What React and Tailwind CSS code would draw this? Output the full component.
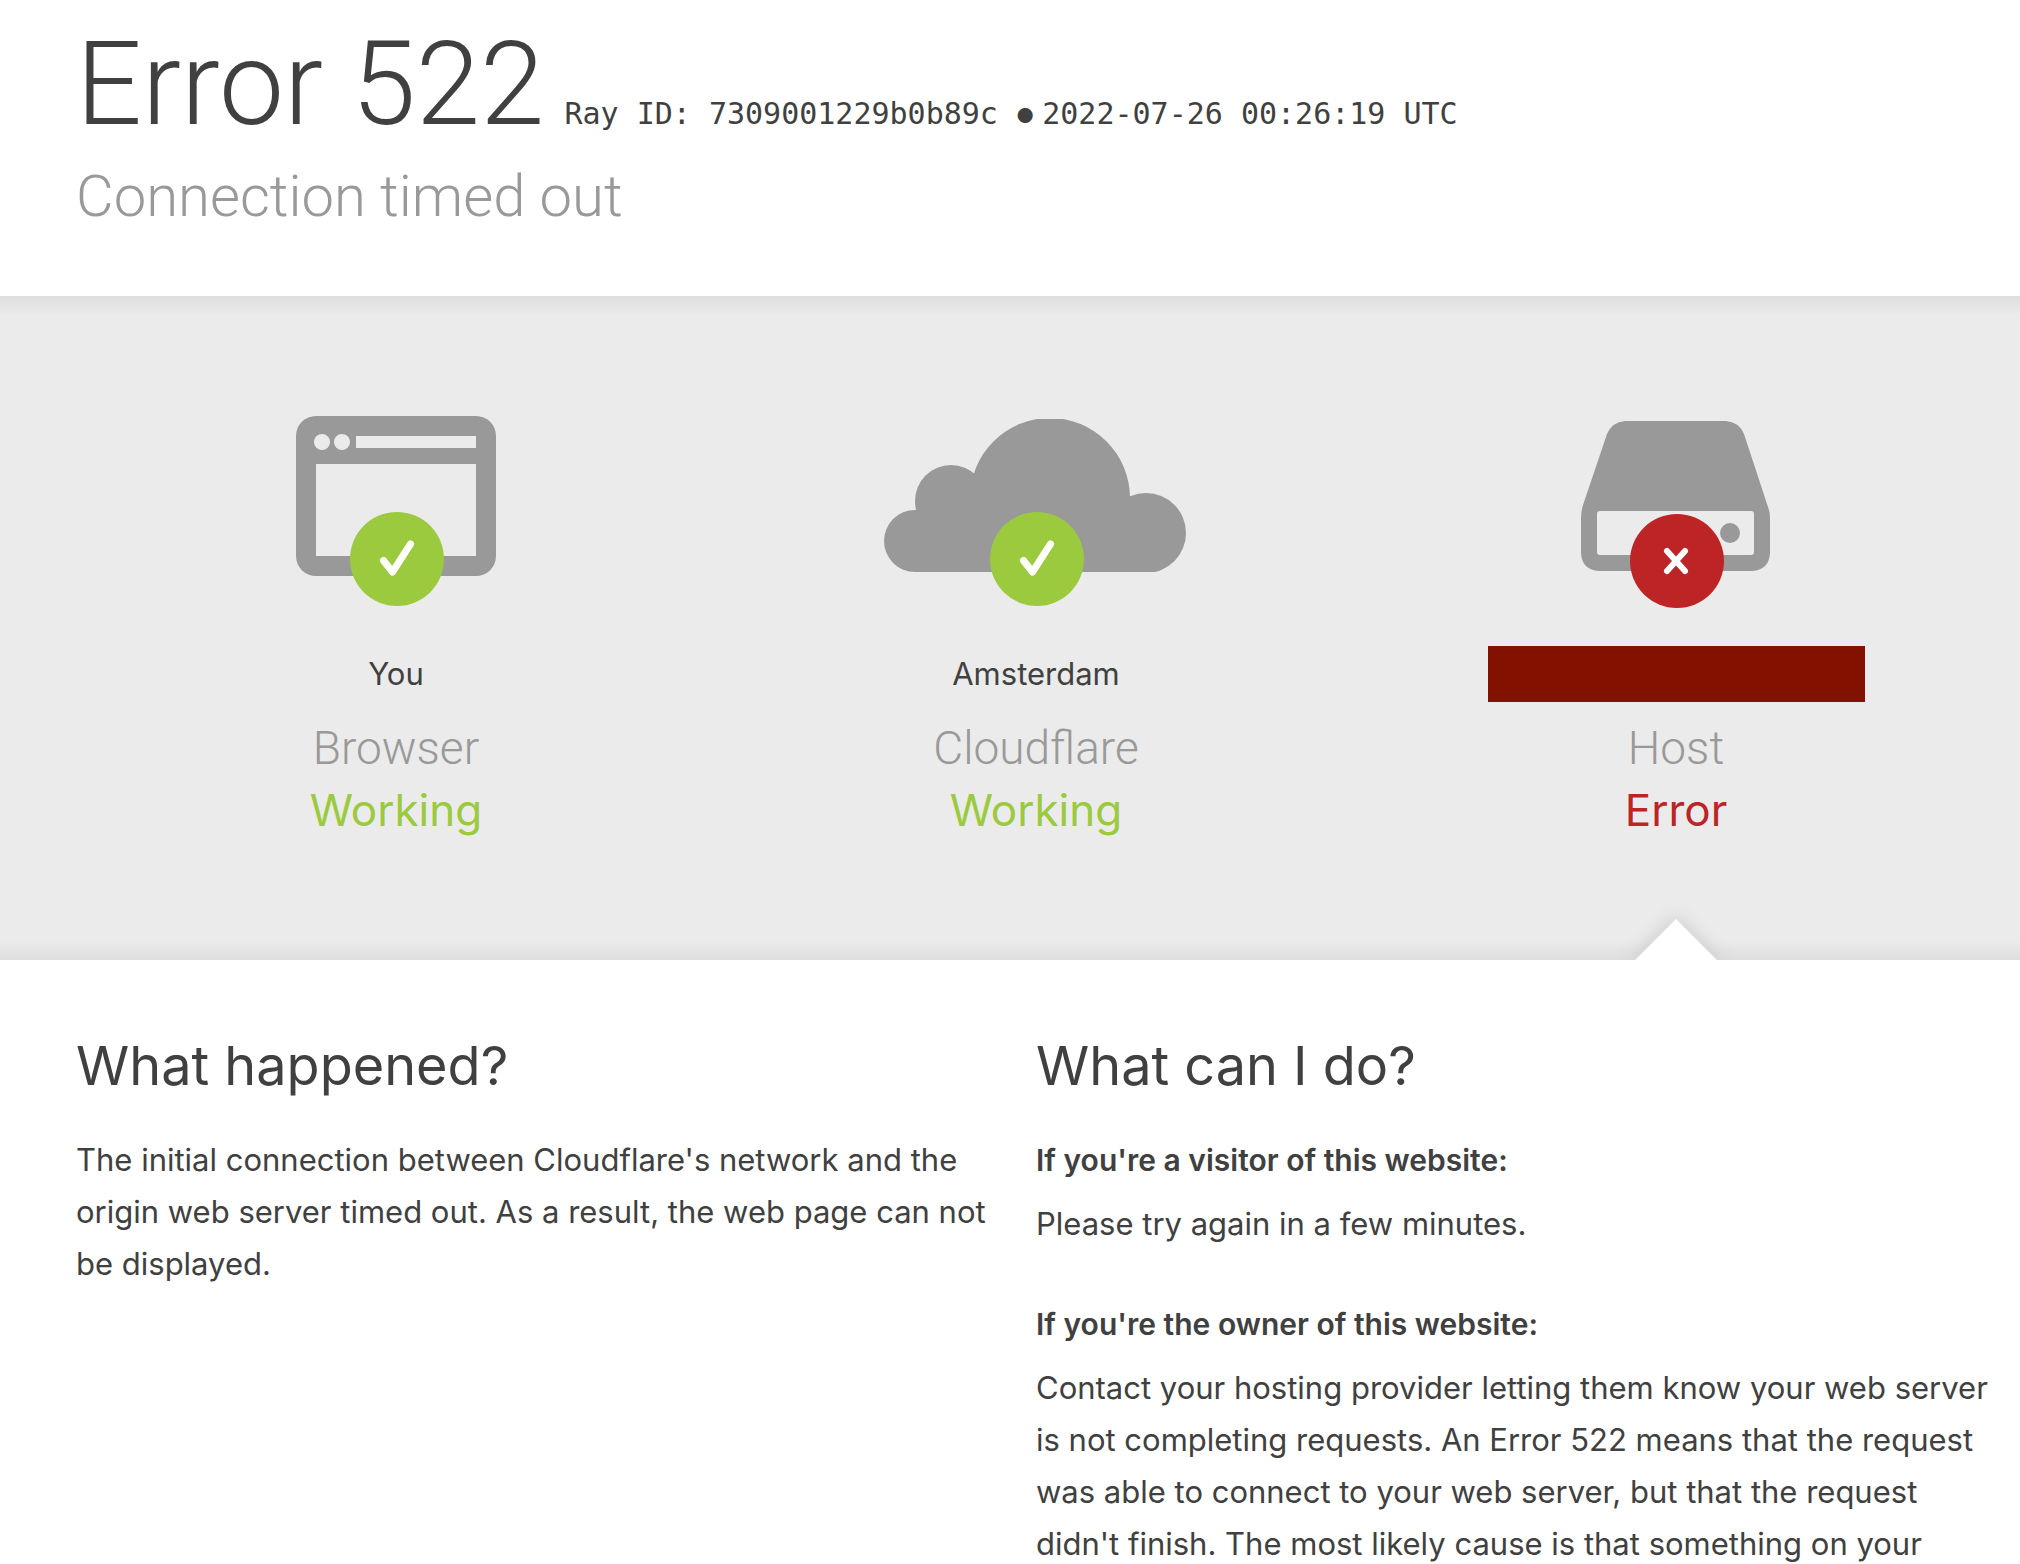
import React from "react";

const OkBadge = ({ x, y }) => (
  <g transform={`translate(${x} ${y})`}>
    <circle r="47" fill="#9bca3e" />
    <path d="M-13.500 1.500 L-4.500 13 L13.500 -15" fill="none" stroke="#fff" strokeWidth="7"
      strokeLinecap="round" strokeLinejoin="round" />
  </g>
);

const ErrorBadge = ({ x, y }) => (
  <g transform={`translate(${x} ${y})`}>
    <circle r="47" fill="#bd2426" />
    <path d="M-10 -10 L8 10 M8 -10 L-10 10" fill="none" stroke="#fff" strokeWidth="6"
      strokeLinecap="round" />
  </g>
);

const BrowserIcon = () => (
  <svg width="304" height="192" viewBox="0 0 304 192" aria-hidden="true">
    <rect x="52" y="0" width="200" height="160" rx="20" fill="#999" />
    <circle cx="78" cy="26" r="8" fill="#ebebeb" />
    <circle cx="98" cy="26" r="8" fill="#ebebeb" />
    <rect x="112" y="20" width="120" height="12" fill="#ebebeb" />
    <rect x="72" y="48" width="160" height="92" fill="#ebebeb" />
    <OkBadge x={153} y={143} />
  </svg>
);

const CloudIcon = () => (
  <svg width="304" height="192" viewBox="0 0 304 192" aria-hidden="true">
    <clipPath id="cloud-clip"><rect y="3" width="304" height="153" /></clipPath>
    <g fill="#999" clipPath="url(#cloud-clip)">
      <circle cx="31" cy="125" r="31" />
      <circle cx="67" cy="85" r="36" />
      <circle cx="166" cy="82" r="80" />
      <circle cx="262" cy="117" r="40" />
      <path d="M31 94 H60 V80 H262 V156 H31 Z" />
    </g>
    <OkBadge x={153} y={143} />
  </svg>
);

const ServerIcon = () => (
  <svg width="304" height="192" viewBox="0 0 304 192" aria-hidden="true">
    <path d="M101 5 H202 Q215 6 220 18 L244 91 Q246 96 246 102 V137 Q245 154 228 155 H75 Q58 154 57 137 V102 Q57 96 59 89 L83 18 Q88 6 101 5 Z"
      fill="#999" />
    <rect x="73" y="95" width="157" height="44" rx="3" fill="#ebebeb" />
    <circle cx="206" cy="117" r="10" fill="#999" />
    <ErrorBadge x={153} y={145} />
  </svg>
);

const columns = [
  { icon: <BrowserIcon />, place: "You",       name: "Browser",    status: "Working", ok: true },
  { icon: <CloudIcon />,   place: "Amsterdam", name: "Cloudflare", status: "Working", ok: true },
  { icon: <ServerIcon />,  place: null,        name: "Host",       status: "Error",   ok: false },
];

export default function App() {
  return (
    <div className="min-h-screen bg-white text-[#404040] font-['Inter',sans-serif]">

      {/* Title */}
      <header className="pl-19 pr-6 pt-5 pb-16">
        <h1 className="flex flex-wrap items-baseline gap-x-5">
          <span className="text-[116px] leading-[128px] font-light font-['Roboto',sans-serif]">Error 522</span>
          <span className="text-[30px] leading-[48px] font-['DejaVu_Sans_Mono',monospace]">
            Ray ID: 7309001229b0b89c <span className="mr-2 text-[20px] align-middle font-['Inter',sans-serif]">●</span>
            2022-07-26 00:26:19 UTC
          </span>
        </h1>
        <h2 className="mt-3 text-[58px] leading-[72px] font-light text-[#999] font-['Roboto',sans-serif]">Connection timed out</h2>
      </header>

      {/* Status band */}
      <section className="overflow-hidden bg-[linear-gradient(to_bottom,#dedede,#ebebeb_3%,#ebebeb_97%,#dedede)]">
        <div className="pl-19 pr-6 grid grid-cols-3">
          {columns.map((c) => (
            <div key={c.name} className="relative flex flex-col items-center pt-30 pb-30 text-center">
              {c.icon}
              <div className="mt-8 h-17 flex items-center">
                {c.place
                  ? <span className="text-[31px] leading-[52px]">{c.place}</span>
                  : <span className="block w-[377px] h-14 bg-[#831100]" />}
              </div>
              <h3 className="mt-2 text-[46px] leading-[64px] font-light text-[#999] font-['Roboto',sans-serif]">{c.name}</h3>
              <span className={`text-[44px] leading-[60px] ${c.ok ? "text-[#9bca3e]" : "text-[#bd2426]"}`}>
                {c.status}
              </span>
              {!c.ok && (
                <div className="absolute -bottom-[29px] size-[58px] rotate-45 bg-white shadow-[0_0_18px_2px_#ccc]" />
              )}
            </div>
          ))}
        </div>
      </section>

      {/* Explanation */}
      <section className="relative bg-white pl-19 pr-6 pt-17 grid grid-cols-2 text-[31px] leading-[52px]">
        <div className="pr-12">
          <h2 className="mb-[30px] text-[54px] leading-[76px]">What happened?</h2>
          <p>
            The initial connection between Cloudflare's network and the origin web server timed
            out. As a result, the web page can not be displayed.
          </p>
        </div>
        <div>
          <h2 className="mb-[30px] text-[54px] leading-[76px]">What can I do?</h2>
          <h3 className="mb-3 text-[30px] font-semibold">If you're a visitor of this website:</h3>
          <p className="mb-12">Please try again in a few minutes.</p>
          <h3 className="mb-3 text-[30px] font-semibold">If you're the owner of this website:</h3>
          <p>
            Contact your hosting provider letting them know your web server is not completing
            requests. An Error 522 means that the request was able to connect to your web
            server, but that the request didn't finish. The most likely cause is that something on your
          </p>
        </div>
      </section>
    </div>
  );
}
